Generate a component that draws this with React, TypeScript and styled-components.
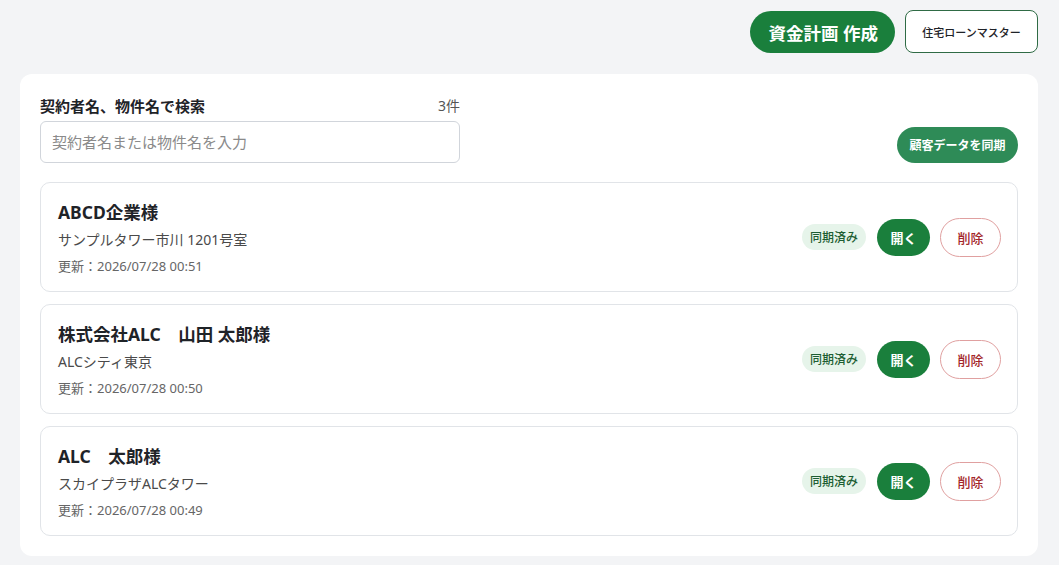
import React from "react";
import styled, { createGlobalStyle } from "styled-components";

const GlobalStyle = createGlobalStyle`
  * { box-sizing: border-box; }
  html, body {
    margin: 0;
    padding: 0;
    background: #f3f4f6;
    font-family: "Noto Sans", "Noto Sans CJK JP", sans-serif;
    color: #1f2328;
  }
`;

const Page = styled.div`
  padding: 10px 21px 9px 20px;
  display: flex;
  flex-direction: column;
  gap: 21px;
`;

const Toolbar = styled.div`
  display: flex;
  justify-content: flex-end;
  align-items: center;
  gap: 10px;
`;

const PrimaryButton = styled.button`
  height: 42px;
  padding: 0 17px 0 18px;
  margin-top: 1px;
  border: none;
  border-radius: 21px;
  background: #1a7f3c;
  color: #fff;
  font-family: inherit;
  font-size: 17.5px;
  font-weight: 700;
  cursor: pointer;
`;

const OutlineButton = styled.button`
  height: 43px;
  width: 133px;
  padding: 0;
  border: 1px solid #2f6b45;
  border-radius: 8px;
  background: #fff;
  color: #1f2328;
  font-family: inherit;
  font-size: 11px;
  font-weight: 500;
  cursor: pointer;
`;

const Panel = styled.div`
  background: #fff;
  border-radius: 12px;
  padding: 20px;
  display: flex;
  flex-direction: column;
  gap: 12px;
`;

const SearchBar = styled.div`
  display: flex;
  justify-content: space-between;
  align-items: flex-end;
  margin-bottom: 7px;
`;

const SearchColumn = styled.div`
  width: 420px;
  display: flex;
  flex-direction: column;
  gap: 5px;
`;

const LabelRow = styled.div`
  display: flex;
  justify-content: space-between;
  align-items: center;
  height: 22px;
`;

const Label = styled.span`
  font-size: 15px;
  font-weight: 700;
  color: #1f2328;
`;

const Count = styled.span`
  font-size: 14px;
  color: #555;
`;

const SearchInput = styled.input`
  height: 42px;
  width: 100%;
  border: 1px solid #d1d5db;
  border-radius: 6px;
  padding: 0 11px;
  font-family: inherit;
  font-size: 15px;
  color: #1f2328;
  outline: none;
  &::placeholder { color: #8a8a8a; }
`;

const SyncButton = styled.button`
  height: 36px;
  width: 121px;
  padding: 0;
  border: none;
  border-radius: 18px;
  background: #2e8b57;
  color: #fff;
  font-family: inherit;
  font-size: 12px;
  font-weight: 700;
  cursor: pointer;
`;

const Row = styled.div`
  height: 110px;
  border: 1px solid #e1e4e8;
  border-radius: 10px;
  padding: 0 16px 0 17px;
  display: flex;
  justify-content: space-between;
  align-items: center;
`;

const Info = styled.div`
  display: flex;
  flex-direction: column;
`;

const Name = styled.div`
  font-size: 17.5px;
  font-weight: 700;
  line-height: 26px;
  white-space: pre;
  color: #1f2328;
`;

const Address = styled.div`
  font-size: 14px;
  line-height: 22px;
  color: #4a4a4a;
  margin-top: 4px;
`;

const Updated = styled.div`
  font-size: 13px;
  line-height: 18px;
  color: #666;
  margin-top: 6px;
`;

const Actions = styled.div`
  display: flex;
  align-items: center;
  gap: 10px;
`;

const Badge = styled.span`
  height: 26px;
  width: 64px;
  justify-content: center;
  border-radius: 13px;
  background: #e6f4ea;
  color: #1d5e33;
  font-size: 12px;
  font-weight: 500;
  display: inline-flex;
  align-items: center;
  margin-right: 1px;
`;

const OpenButton = styled.button`
  height: 37px;
  width: 53px;
  border: none;
  border-radius: 19px;
  background: #1a7f3c;
  color: #fff;
  font-family: inherit;
  font-size: 13px;
  font-weight: 700;
  cursor: pointer;
`;

const DeleteButton = styled.button`
  height: 39px;
  width: 61px;
  border: 1px solid #e0a0a0;
  border-radius: 20px;
  background: #fff;
  color: #a3262a;
  font-family: inherit;
  font-size: 13px;
  font-weight: 500;
  cursor: pointer;
`;

type Contract = { name: string; property: string; updated: string };

const contracts: Contract[] = [
  { name: "ABCD企業様", property: "サンプルタワー市川 1201号室", updated: "2026/07/28 00:51" },
  { name: "株式会社ALC　山田 太郎様", property: "ALCシティ東京", updated: "2026/07/28 00:50" },
  { name: "ALC　太郎様", property: "スカイプラザALCタワー", updated: "2026/07/28 00:49" },
];

export default function App() {
  return (
    <>
      <GlobalStyle />
      <Page>
        <Toolbar>
          <PrimaryButton>資金計画 作成</PrimaryButton>
          <OutlineButton>住宅ローンマスター</OutlineButton>
        </Toolbar>
        <Panel>
          <SearchBar>
            <SearchColumn>
              <LabelRow>
                <Label>契約者名、物件名で検索</Label>
                <Count>3件</Count>
              </LabelRow>
              <SearchInput placeholder="契約者名または物件名を入力" />
            </SearchColumn>
            <SyncButton>顧客データを同期</SyncButton>
          </SearchBar>
          {contracts.map((c) => (
            <Row key={c.updated}>
              <Info>
                <Name>{c.name}</Name>
                <Address>{c.property}</Address>
                <Updated>更新：{c.updated}</Updated>
              </Info>
              <Actions>
                <Badge>同期済み</Badge>
                <OpenButton>開く</OpenButton>
                <DeleteButton>削除</DeleteButton>
              </Actions>
            </Row>
          ))}
        </Panel>
      </Page>
    </>
  );
}
